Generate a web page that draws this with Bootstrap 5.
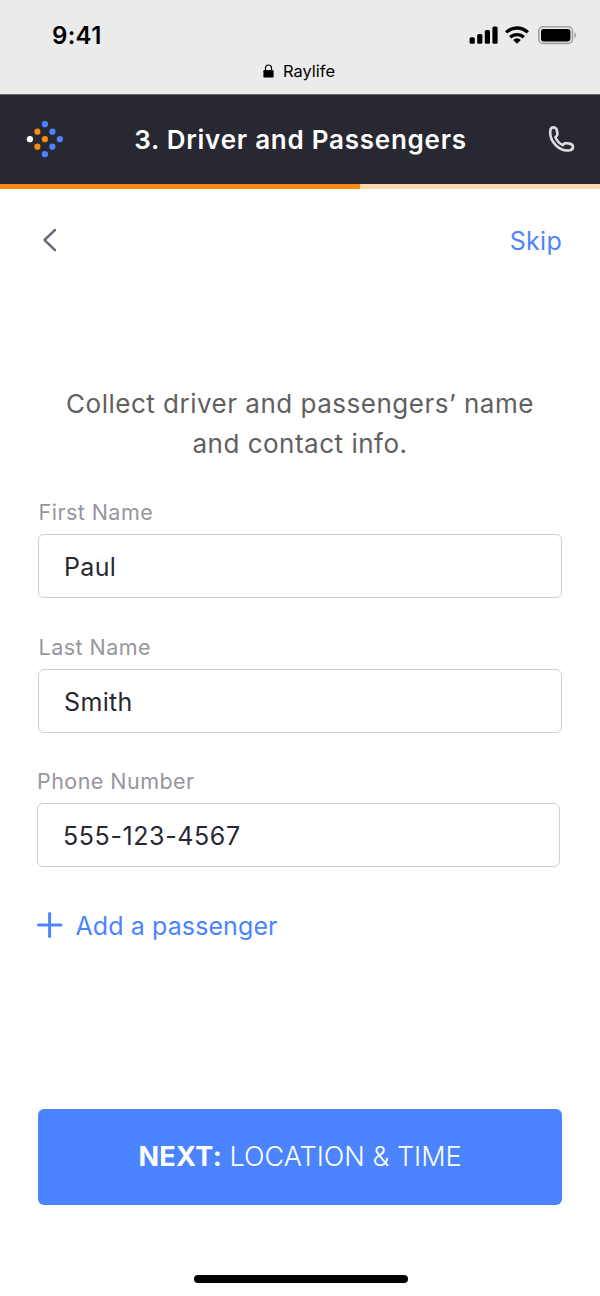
<!DOCTYPE html>
<html lang="en">
<head>
<meta charset="utf-8">
<meta name="viewport" content="width=device-width, initial-scale=1">
<title>Raylife – Driver and Passengers</title>
<link href="https://cdn.jsdelivr.net/npm/bootstrap@5.3.0/dist/css/bootstrap.min.css" rel="stylesheet">
<style>
  body { font-family: Inter, "Liberation Sans", sans-serif; background: #fff; }
  .screen { width: 600px; height: 1296px; }
  svg { display: block; flex: none; }
  .status-area { height: 94px; background: #ebebeb; color: #000; box-shadow: 0 1px 0 #67666d; z-index: 1; }
  .status-row { height: 48px; padding: 22px 24px 0 52px; }
  .clock { font-size: 24px; font-weight: 600; line-height: 27px; letter-spacing: .3px; }
  .site { height: 46px; gap: 9px; font-size: 16.5px; line-height: 46px; padding-right: 2px; }
  .app-bar { height: 90px; padding: 0 25px 0 26px; background: #282833; color: #fff; }
  .app-title { font-size: 26px; font-weight: 600; letter-spacing: .75px; line-height: 40px; margin: 2px 11px 0 0; }
  .steps { height: 5px; background: #ffd9ae; --bs-progress-bar-bg: #fa8b0c; }
  .content-area { padding: 0 38px; }
  .top-links { height: 104px; }
  .back-link { margin-top: -2px; }
  .accent, .accent:hover { color: #4c84ff; }
  .link-text { font-size: 25px; line-height: 32px; letter-spacing: .3px; }
  .intro { margin-top: 91px; color: #606060; font-size: 26px; line-height: 40px; letter-spacing: .5px; }
  .contact-form { padding-top: 34px; }
  .field { height: 98px; margin-bottom: 36.5px; }
  .field-label { display: block; font-size: 21.5px; line-height: 28px; height: 36px; color: #97969d; letter-spacing: .45px; padding-left: .6px; }
  .field-input { height: 64px; border: 1px solid #cdced0; border-radius: 6px; padding: 2px 25px 0; color: #282833; font-size: 25px; letter-spacing: .35px; }
  .phone-input { letter-spacing: .6px; }
  .shifted { margin-left: -1px; margin-right: 2px; }
  .add-link { margin-top: 43px; letter-spacing: .1px; }
  .add-link span { padding: 2px 0 0 12.5px; margin-bottom: -1px; }
  .next-btn { height: 96px; border-radius: 6px; background: #4c84ff; color: #fff; font-size: 27px; font-weight: 300; }
  .next-btn b { font-weight: 700; letter-spacing: .3px; }
  .page-end { padding: 0 38px; }
  .home-bar { width: 214px; height: 8px; border-radius: 4px; background: #000; margin: 70px 0 13px 1px; }
</style>
</head>
<body>
<div class="screen d-flex flex-column overflow-hidden">
  <header class="status-area position-relative">
    <div class="status-row d-flex justify-content-between">
      <span class="clock">9:41</span>
      <svg width="108" height="26" viewBox="468 22 108 26">
        <g fill="#000">
          <rect x="469.6" y="37.2" width="5.2" height="6.6" rx="1.5"/>
          <rect x="477.2" y="34" width="5.2" height="9.8" rx="1.5"/>
          <rect x="484.8" y="30" width="5.2" height="13.8" rx="1.5"/>
          <rect x="492.4" y="26.6" width="5.2" height="17.2" rx="1.5"/>
          <path d="M517 43.8l-3.8-3.9a5.4 5.4 0 0 1 7.6 0z"/>
        </g>
        <path d="M506.2 32.4a15.4 15.4 0 0 1 21.6 0M510.2 37.3a9.8 9.8 0 0 1 13.6 0" fill="none" stroke="#000" stroke-width="3.3"/>
        <rect x="538.8" y="26.8" width="33.6" height="16.6" rx="4.2" fill="none" stroke="#a2a2a2" stroke-width="1.6"/>
        <rect x="541" y="29" width="29.4" height="12.4" rx="2.4"/>
        <path d="M574.3 32.2c2.3 1 2.3 5 0 6z" fill="#a2a2a2"/>
      </svg>
    </div>
    <div class="site d-flex align-items-center justify-content-center">
      <svg width="11" height="14" viewBox="0 0 11 14"><path d="M2.5 7V4a3 3 0 0 1 6 0v3" fill="none" stroke="#000" stroke-width="1.2"/><rect x=".4" y="6" width="10.2" height="7.6" rx="1.2"/></svg>
      <span>Raylife</span>
    </div>
  </header>

  <nav class="app-bar d-flex align-items-center justify-content-between">
    <svg width="38" height="38" viewBox="0 0 38 38">
      <g fill="#4c84ff"><circle cx="18.9" cy="4.2" r="3.1"/><circle cx="26.4" cy="11.7" r="3.1"/><circle cx="33.9" cy="19.2" r="3.1"/><circle cx="26.4" cy="26.7" r="3.1"/><circle cx="18.9" cy="34.2" r="3.1"/></g>
      <g fill="#fa8b0c"><circle cx="11.4" cy="11.7" r="3.1"/><circle cx="18.9" cy="19.2" r="3.1"/><circle cx="11.4" cy="26.7" r="3.1"/></g>
      <circle cx="3.9" cy="19.2" r="3.1" fill="#fff"/>
    </svg>
    <span class="app-title">3. Driver and Passengers</span>
    <svg width="27" height="27" viewBox="548 126 27 27" fill="none" stroke="#dedee0" stroke-width="2.6" stroke-linejoin="round"><path d="M550.4 129.9c.5-2 2.3-2.8 3.9-2.4 1.6.4 2.4 1.7 2.7 3.5l.4 2.9c.2 1.5-.5 2.3-2 3.2 1.2 3.3 4 6.3 7.4 8 1.2-1.5 2.2-2.1 3.7-1.9l2.9.4c2 .3 3.5 1.3 3.6 3 .1 1.800-1.3 3.2-3.1 3.6-10.3 1.9-21.1-8.8-19.5-20.3z"/></svg>
  </nav>
  <div class="steps progress rounded-0" role="progressbar" aria-valuenow="60" aria-valuemin="0" aria-valuemax="100">
    <div class="progress-bar" style="width:60%"></div>
  </div>

  <main class="content-area">
    <div class="top-links d-flex align-items-center justify-content-between">
      <a href="#" class="back-link" aria-label="Back"><svg width="22" height="26" viewBox="0 0 22 26" fill="none" stroke="#6b6c7e" stroke-width="2.5" stroke-linecap="round" stroke-linejoin="round"><path d="M17 3L6.5 13 17 23.2"/></svg></a>
      <a href="#" class="accent link-text text-decoration-none">Skip</a>
    </div>
    <p class="intro text-center mb-0">Collect driver and passengers’ name<br>and contact info.</p>
    <form class="contact-form">
      <div class="field">
        <label class="field-label" for="first">First Name</label>
        <input id="first" class="form-control field-input" value="Paul">
      </div>
      <div class="field">
        <label class="field-label" for="last">Last Name</label>
        <input id="last" class="form-control field-input" value="Smith">
      </div>
      <div class="field shifted">
        <label class="field-label ps-0" for="phone">Phone Number</label>
        <input id="phone" class="form-control field-input phone-input" value="555-123-4567">
      </div>
      <a href="#" class="add-link accent link-text text-decoration-none d-flex align-items-center shifted">
        <svg width="26" height="26" viewBox="0 0 26 26" stroke="#4c84ff" stroke-width="3" stroke-linecap="round"><path d="M12.6 1.5v23M1.5 13h22.5"/></svg>
        <span>Add a passenger</span>
      </a>
    </form>
  </main>
  <footer class="page-end mt-auto d-flex flex-column align-items-center">
    <button type="button" class="btn next-btn w-100 p-0"><b>NEXT:</b> LOCATION &amp; TIME</button>
    <div class="home-bar"></div>
  </footer>
</div>
<script src="https://cdn.jsdelivr.net/npm/bootstrap@5.3.0/dist/js/bootstrap.bundle.min.js"></script>
</body>
</html>
